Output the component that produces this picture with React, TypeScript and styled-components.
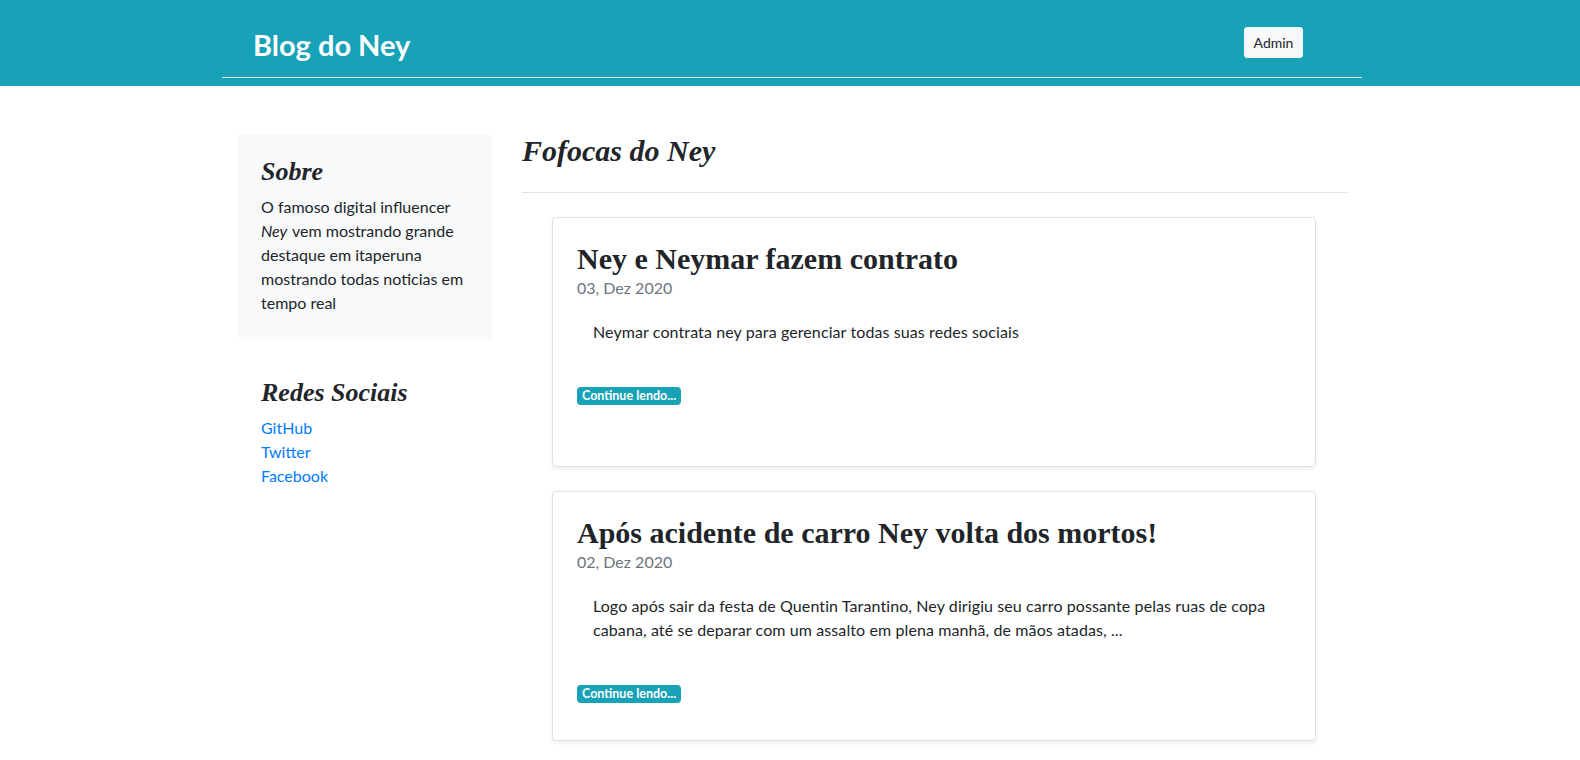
import React from "react";
import styled, { createGlobalStyle } from "styled-components";

const GlobalStyle = createGlobalStyle`
  html, body { margin: 0; padding: 0; overflow: hidden; }
  body {
    background: #ffffff;
    color: #212529;
    font-family: Lato, "Noto Sans", "Liberation Sans", sans-serif;
    font-size: 16px;
    line-height: 24px;
  }
  * { box-sizing: border-box; }
`;

const Header = styled.header`
  background: #17a2b8;
  height: 86px;
`;

const HeaderBar = styled.div`
  width: 1140px;
  margin-left: calc(50% - 568px);
  height: 78px;
  padding: 8px 59px 0 31px;
  border-bottom: 1px solid rgba(255, 255, 255, 0.85);
  display: flex;
  align-items: center;
  justify-content: space-between;
`;

const Brand = styled.a`
  color: #ffffff;
  font-family: Lato, "Noto Sans", sans-serif;
  font-weight: 700;
  font-size: 29px;
  line-height: 34px;
  margin-top: 4px;
  text-decoration: none;
`;

const AdminButton = styled.button`
  background: #f8f9fa;
  color: #212529;
  border: 1px solid #f8f9fa;
  border-radius: 3px;
  font-family: Lato, "Noto Sans", sans-serif;
  font-size: 14px;
  line-height: 21px;
  height: 31px;
  width: 59px;
  padding: 4px 8px;
`;

const Main = styled.main`
  width: 1140px;
  margin: 48px 0 0 calc(50% - 568px);
  padding: 0 15px;
  display: grid;
  grid-template-columns: 255px 825px;
  column-gap: 30px;
  align-items: start;
`;

const Sidebar = styled.aside`
  display: flex;
  flex-direction: column;
`;

const SideBlock = styled.div<{ $light?: boolean }>`
  padding: 24px;
  margin-bottom: 16px;
  border-radius: 4px;
  background: ${(p) => (p.$light ? "#f8f9fa" : "transparent")};
`;

const SideTitle = styled.h4`
  margin: 0 0 8px;
  font-family: "Liberation Serif", serif;
  font-style: italic;
  font-weight: 700;
  font-size: 26px;
  line-height: 28.8px;
  color: #212529;
`;

const SideText = styled.p`
  margin: 0;
`;

const Emph = styled.em`
  font-style: italic;
  padding-right: 1px;
`;

const LinkList = styled.ol`
  list-style: none;
  margin: 0;
  padding: 0;
`;

const SocialLink = styled.a`
  color: #007bff;
  text-decoration: none;
`;

const Content = styled.section`
  display: flex;
  flex-direction: column;
`;

const PageTitle = styled.h3`
  margin: 0 0 24px;
  padding-bottom: 24px;
  border-bottom: 1px solid #dee2e6;
  font-family: "Liberation Serif", serif;
  font-style: italic;
  font-weight: 700;
  font-size: 30px;
  line-height: 33.6px;
  color: #212529;
`;

const PostCard = styled.article`
  margin: 0 31px 24px 30px;
  height: 250px;
  border: 1px solid #dee2e6;
  border-radius: 4px;
  box-shadow: 0 2px 4px rgba(0, 0, 0, 0.075);
  padding: 24px;
  display: flex;
  flex-direction: column;
  align-items: flex-start;
  overflow: hidden;
`;

const PostTitle = styled.h2`
  margin: 0;
  font-family: "Liberation Serif", serif;
  font-weight: 700;
  font-size: 30px;
  line-height: 34px;
  color: #212529;
`;

const PostDate = styled.div`
  color: #6c757d;
  font-size: 16px;
  line-height: 24px;
`;

const PostText = styled.p`
  margin: 20px 0 0;
  padding-left: 16px;
  font-size: 16px;
  line-height: 24px;
  letter-spacing: 0.1px;
  color: #212529;
`;

const ReadMore = styled.a`
  margin-top: 43px;
  display: inline-block;
  background: #17a2b8;
  color: #ffffff;
  font-size: 12.5px;
  font-weight: 700;
  line-height: 12px;
  padding: 3px 5px;
  border-radius: 4px;
  text-decoration: none;
  white-space: nowrap;
`;

const posts = [
  {
    title: "Ney e Neymar fazem contrato",
    date: "03, Dez 2020",
    text: "Neymar contrata ney para gerenciar todas suas redes sociais",
  },
  {
    title: "Após acidente de carro Ney volta dos mortos!",
    date: "02, Dez 2020",
    text:
      "Logo após sair da festa de Quentin Tarantino, Ney dirigiu seu carro possante pelas ruas de copa cabana, até se deparar com um assalto em plena manhã, de mãos atadas, ...",
  },
];

export default function App() {
  return (
    <>
      <GlobalStyle />
      <Header>
        <HeaderBar>
          <Brand href="#">Blog do Ney</Brand>
          <AdminButton>Admin</AdminButton>
        </HeaderBar>
      </Header>
      <Main>
        <Sidebar>
          <SideBlock $light>
            <SideTitle>Sobre</SideTitle>
            <SideText>
              O famoso digital influencer <Emph>Ney</Emph> vem mostrando grande
              destaque em itaperuna mostrando todas noticias em tempo real
            </SideText>
          </SideBlock>
          <SideBlock>
            <SideTitle>Redes Sociais</SideTitle>
            <LinkList>
              <li>
                <SocialLink href="#">GitHub</SocialLink>
              </li>
              <li>
                <SocialLink href="#">Twitter</SocialLink>
              </li>
              <li>
                <SocialLink href="#">Facebook</SocialLink>
              </li>
            </LinkList>
          </SideBlock>
        </Sidebar>
        <Content>
          <PageTitle>Fofocas do Ney</PageTitle>
          {posts.map((p) => (
            <PostCard key={p.title}>
              <PostTitle>{p.title}</PostTitle>
              <PostDate>{p.date}</PostDate>
              <PostText>{p.text}</PostText>
              <ReadMore href="#">Continue lendo...</ReadMore>
            </PostCard>
          ))}
        </Content>
      </Main>
    </>
  );
}
